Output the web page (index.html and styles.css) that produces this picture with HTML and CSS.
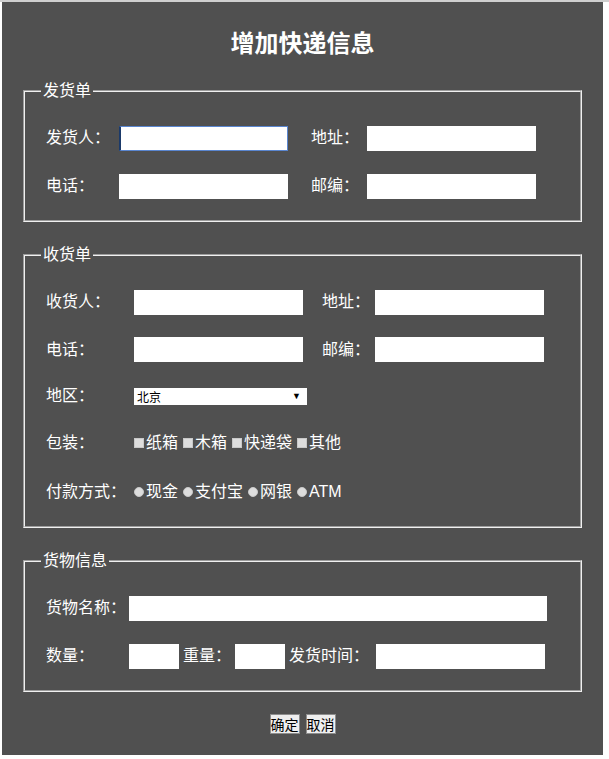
FILE: index.html
```html
<!DOCTYPE html>
<html lang="zh-CN">
<head>
    <meta charset="UTF-8">
    <meta name="viewport" content="width=device-width, initial-scale=1.0">
    <title>增加快递信息</title>
    <link rel="stylesheet" href="styles.css">
</head>
<body>
    <div class="page">
        <h1 class="title">增加快递信息</h1>

        <form id="expressForm">
            <!-- 发货单 -->
            <fieldset>
                <legend>发货单</legend>
                <div class="grid grid-sender">
                    <label>发货人：</label>
                    <input type="text" class="field is-focused">
                    <label>地址：</label>
                    <input type="text" class="field">
                    <label>电话：</label>
                    <input type="text" class="field">
                    <label>邮编：</label>
                    <input type="text" class="field">
                </div>
            </fieldset>

            <!-- 收货单 -->
            <fieldset>
                <legend>收货单</legend>
                <div class="grid grid-receiver">
                    <label>收货人：</label>
                    <input type="text" class="field">
                    <label>地址：</label>
                    <input type="text" class="field">

                    <label>电话：</label>
                    <input type="text" class="field">
                    <label>邮编：</label>
                    <input type="text" class="field">

                    <label>地区：</label>
                    <div class="wide">
                        <span class="select-box">
                            <select>
                                <option>北京</option>
                                <option>上海</option>
                                <option>广州</option>
                                <option>深圳</option>
                            </select>
                        </span>
                    </div>

                    <label>包装：</label>
                    <div class="wide options">
                        <label><input type="checkbox" class="box">纸箱</label>
                        <label><input type="checkbox" class="box">木箱</label>
                        <label><input type="checkbox" class="box">快递袋</label>
                        <label><input type="checkbox" class="box">其他</label>
                    </div>

                    <label>付款方式：</label>
                    <div class="wide options">
                        <label><input type="radio" name="pay" class="dot">现金</label>
                        <label><input type="radio" name="pay" class="dot">支付宝</label>
                        <label><input type="radio" name="pay" class="dot">网银</label>
                        <label><input type="radio" name="pay" class="dot">ATM</label>
                    </div>
                </div>
            </fieldset>

            <!-- 货物信息 -->
            <fieldset>
                <legend>货物信息</legend>
                <div class="goods">
                    <div class="row">
                        <label class="goods-label">货物名称：</label>
                        <input type="text" class="field field-long">
                    </div>
                    <div class="row">
                        <label class="goods-label">数量：</label>
                        <input type="text" class="field field-small">
                        <label>重量：</label>
                        <input type="text" class="field field-small">
                        <label class="time-label">发货时间：</label>
                        <input type="text" class="field">
                    </div>
                </div>
            </fieldset>

            <div class="buttons">
                <button type="submit">确定</button>
                <button type="reset">取消</button>
            </div>
        </form>
    </div>
</body>
</html>
```

FILE: styles.css
```css
body {
    margin: 0;
    padding: 0 0 0 2px;
    border-top: 2px solid #cfcfcf;
    background-color: #fff;
    font-family: "Liberation Sans", "Noto Sans CJK SC", sans-serif;
}
.page {
    width: 559px;
    background-color: #505050;
    color: #fff;
    padding: 24px 21px 21px;
}
.title {
    margin: 0 0 23px;
    font-size: 24px;
    line-height: 31px;
    text-align: center;
    font-family: "Noto Sans CJK SC", sans-serif;
    font-weight: bold;
}
/* Fieldset styles */
fieldset {
    margin: 0 0 22px;
    padding: 0 16px 10px;
    border: 2px groove #f0f0f0;
}
legend {
    padding: 0 2px;
    font-size: 16px;
    line-height: 22px;
}
label {
    font-size: 16px;
    line-height: 22px;
    white-space: nowrap;
}
.grid {
    display: grid;
    align-items: center;
    grid-auto-rows: 48px;
    padding: 12px 0 0 5px;
}
.grid-sender {
    grid-template-columns: 73px 192px 56px 169px;
}
.grid-receiver {
    grid-template-columns: 88px 188px 53px 169px;
    grid-template-rows: 48px 47px 46px 48px 49px;
}
.wide {
    grid-column: 2 / 5;
}
.field {
    box-sizing: border-box;
    width: 169px;
    height: 25px;
    border: 1px solid #fff;
    background-color: #fff;
    padding: 0 2px;
    outline: none;
}
.field.is-focused {
    border-color: #5a86d0;
    border-left: 2px solid #1b3a6a;
}
/* Select */
.select-box {
    position: relative;
    display: inline-block;
    vertical-align: middle;
}
.select-box select {
    appearance: none;
    width: 173px;
    height: 17px;
    border: none;
    border-radius: 0;
    background-color: #fff;
    padding: 0 0 0 3px;
    font-size: 12px;
    font-family: "Noto Sans CJK SC", sans-serif;
    color: #000;
    display: block;
}
.select-box::after {
    content: "▼";
    position: absolute;
    right: 6px;
    top: 2px;
    font-size: 9px;
    line-height: 12px;
    color: #000;
    pointer-events: none;
}
/* Check boxes and radios */
.options {
    display: flex;
    gap: 5px;
    align-items: center;
}
.options label {
    display: flex;
    align-items: center;
}
.box, .dot {
    appearance: none;
    width: 10px;
    height: 10px;
    margin: 0 2px 0 0;
    background-color: #ddd;
    border: 1px solid #c8c8c8;
}
.dot {
    border-radius: 50%;
}
/* Goods info */
.goods {
    padding: 12px 0 0 5px;
}
.goods .row {
    display: flex;
    align-items: center;
    gap: 4px;
    height: 48px;
}
.goods-label {
    width: 79px;
}
.field-long {
    width: 418px;
}
.field-small {
    width: 50px;
}
.time-label {
    margin-right: 3px;
}
/* Buttons */
.buttons {
    display: flex;
    justify-content: center;
    gap: 6px;
    margin-top: 22px;
}
button {
    width: 30px;
    height: 20px;
    padding: 0;
    font-size: 14px;
    font-family: "Noto Sans CJK SC", sans-serif;
    line-height: 16px;
    color: #000;
    background-color: #eee;
    border: 1px solid #8d8d8d;
    border-radius: 0;
    cursor: pointer;
}
button:hover {
    background-color: #ddd;
}
```
